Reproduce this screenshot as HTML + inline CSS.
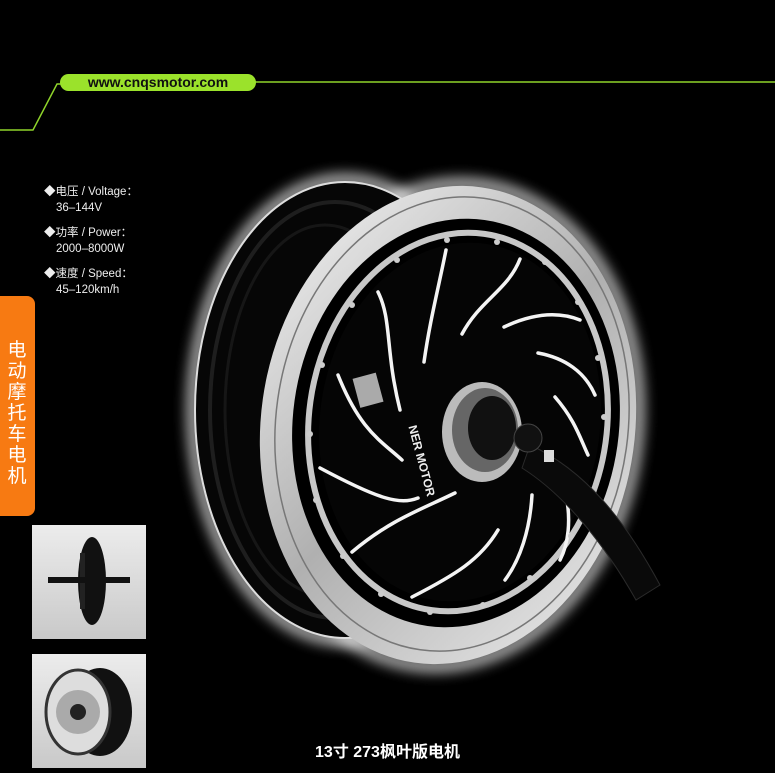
<!DOCTYPE html>
<html><head><meta charset="utf-8"><style>
html,body{margin:0;padding:0;background:#000;}
body{width:775px;height:768px;position:relative;overflow:hidden;font-family:"Liberation Sans","Noto Sans CJK SC",sans-serif;color:#fff;}
.url{position:absolute;left:60px;top:74px;width:196px;height:17px;background:#9be22b;border-radius:9px;color:#111;font-weight:bold;font-size:14px;line-height:17px;text-align:center;}
.spec{position:absolute;left:44px;font-size:11.5px;line-height:16px;color:#eee;}
.spec span{display:block;padding-left:12px;}
.tab{position:absolute;left:0;top:296px;width:35px;height:220px;background:#f77a12;border-radius:0 8px 8px 0;}
.tab div{position:absolute;left:6px;top:44px;width:22px;font-size:19px;line-height:21px;color:#fff;text-align:center;}
.thumb{position:absolute;left:32px;width:114px;background:linear-gradient(#ececec,#c9c9c9);}
.cap{position:absolute;left:0;width:775px;top:738px;text-align:center;font-weight:bold;font-size:16px;color:#fff;}
</style></head><body>
<svg width="775" height="768" style="position:absolute;left:0;top:0">
<defs>
<filter id="gl" x="-30%" y="-30%" width="160%" height="160%"><feGaussianBlur stdDeviation="7"/></filter>
<linearGradient id="rim" x1="0" y1="0" x2="1" y2="1"><stop offset="0" stop-color="#f5f5f5"/><stop offset=".5" stop-color="#b0b0b0"/><stop offset="1" stop-color="#eeeeee"/></linearGradient>
</defs>
<polyline points="0,130 33,130 57,84 62,84" fill="none" stroke="#8fd42a" stroke-width="1.5"/>
<line x1="255" y1="82" x2="775" y2="82" stroke="#8fd42a" stroke-width="1.5"/>
<!-- glow outlines -->
<ellipse cx="345" cy="410" rx="152" ry="230" fill="none" stroke="#fff" stroke-width="10" opacity=".9" filter="url(#gl)"/>
<ellipse cx="448" cy="425" rx="189" ry="242" fill="none" stroke="#fff" stroke-width="10" opacity=".9" filter="url(#gl)" transform="rotate(8 448 425)"/>
<!-- rear tire -->
<ellipse cx="345" cy="410" rx="150" ry="228" fill="#060606" stroke="#ddd" stroke-width="2"/>
<ellipse cx="335" cy="410" rx="125" ry="208" fill="none" stroke="#1e1e1e" stroke-width="4"/>
<ellipse cx="325" cy="410" rx="100" ry="185" fill="none" stroke="#161616" stroke-width="3"/>
<!-- front rim -->
<ellipse cx="448" cy="425" rx="187" ry="240" fill="url(#rim)" transform="rotate(8 448 425)"/>
<ellipse cx="452" cy="424" rx="176" ry="228" fill="none" stroke="#777" stroke-width="1.5" transform="rotate(8 452 424)"/>
<ellipse cx="456" cy="423" rx="163" ry="205" fill="#000" transform="rotate(8 456 423)"/>
<ellipse cx="458" cy="422" rx="149" ry="190" fill="none" stroke="#c8c8c8" stroke-width="6" transform="rotate(8 458 422)"/>
<ellipse cx="460" cy="422" rx="140" ry="180" fill="#050505" transform="rotate(8 460 422)"/>
<!-- spokes -->
<g stroke="#f4f4f4" stroke-width="3.5" fill="none" stroke-linecap="round">
<path d="M378 292 C392 320 385 350 400 410"/>
<path d="M446 250 C438 290 430 320 424 362"/>
<path d="M520 259 C508 290 480 300 462 334"/>
<path d="M504 327 C540 310 565 314 580 320"/>
<path d="M538 353 C565 358 585 372 595 395"/>
<path d="M555 397 C575 420 580 438 588 455"/>
<path d="M565 490 C572 520 568 545 560 560"/>
<path d="M532 495 C530 530 520 560 505 580"/>
<path d="M498 530 C480 560 455 575 412 597"/>
<path d="M455 493 C420 510 390 520 352 552"/>
<path d="M418 498 C400 505 380 500 320 468"/>
<path d="M402 460 C380 440 360 430 338 375"/>
</g>
<rect x="356" y="375" width="24" height="30" fill="#aaa" transform="rotate(-15 369 390)"/>
<g fill="#ccc">
<circle cx="447" cy="240" r="3"/><circle cx="497" cy="242" r="3"/><circle cx="545" cy="262" r="3"/><circle cx="397" cy="260" r="3"/><circle cx="352" cy="305" r="3"/><circle cx="322" cy="365" r="3"/><circle cx="310" cy="434" r="3"/><circle cx="316" cy="500" r="3"/><circle cx="343" cy="556" r="3"/><circle cx="381" cy="594" r="3"/><circle cx="430" cy="612" r="3"/><circle cx="483" cy="605" r="3"/><circle cx="530" cy="578" r="3"/><circle cx="571" cy="536" r="3"/><circle cx="604" cy="417" r="3"/><circle cx="598" cy="358" r="3"/><circle cx="578" cy="302" r="3"/>
</g>
<!-- hub -->
<ellipse cx="482" cy="432" rx="40" ry="50" fill="#bbb"/>
<ellipse cx="485" cy="430" rx="33" ry="42" fill="#666"/>
<ellipse cx="492" cy="428" rx="24" ry="32" fill="#111"/>
<path d="M530 445 C585 470 625 520 660 585 L636 600 C605 545 565 495 522 468 Z" fill="#0a0a0a" stroke="#2a2a2a"/>
<circle cx="528" cy="438" r="14" fill="#111" stroke="#444"/>
<rect x="544" y="450" width="10" height="12" fill="#ddd"/>
<text x="375" y="470" font-size="12" font-weight="bold" fill="#eee" transform="rotate(75 420 470)" font-family="Liberation Sans">NER MOTOR</text>
</svg>
<div class="url">www.cnqsmotor.com</div>
<div class="spec" style="top:184px">◆电压 / Voltage：<span>36–144V</span></div>
<div class="spec" style="top:225px">◆功率 / Power：<span>2000–8000W</span></div>
<div class="spec" style="top:266px">◆速度 / Speed：<span>45–120km/h</span></div>
<div class="tab"><div>电动摩托车电机</div></div>
<div class="thumb" style="top:525px;height:114px">
<svg width="114" height="114"><ellipse cx="60" cy="56" rx="14" ry="44" fill="#111"/><rect x="48" y="28" width="5" height="56" fill="#222"/><rect x="16" y="52" width="82" height="6" fill="#111"/></svg></div>
<div class="thumb" style="top:654px;height:114px">
<svg width="114" height="114"><ellipse cx="68" cy="58" rx="32" ry="44" fill="#111"/><ellipse cx="46" cy="58" rx="32" ry="42" fill="#ddd" stroke="#333" stroke-width="3"/><circle cx="46" cy="58" r="22" fill="#aaa"/><circle cx="46" cy="58" r="8" fill="#222"/></svg></div>
<div class="cap">13寸 273枫叶版电机</div>
</body></html>
